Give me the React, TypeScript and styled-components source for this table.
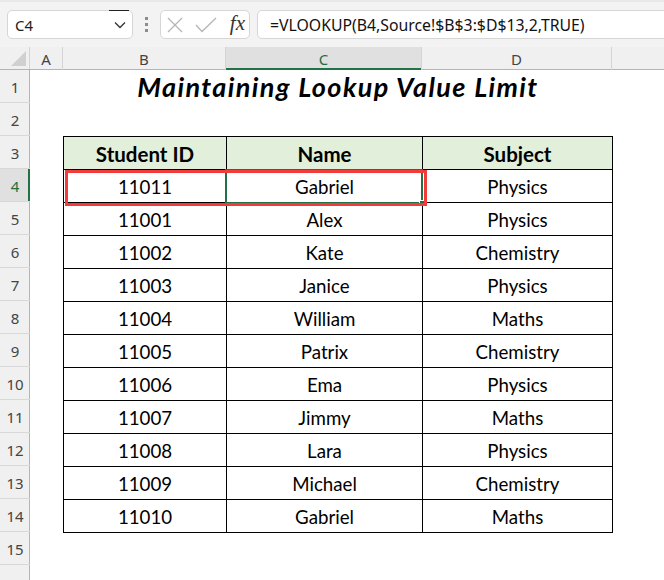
import React from "react";
import styled, { createGlobalStyle } from "styled-components";

const Global = createGlobalStyle`
  html, body { margin: 0; padding: 0; background: #ffffff; overflow: hidden; }
  * { box-sizing: border-box; }
`;

const Page = styled.div`
  width: 664px;
  height: 580px;
  overflow: hidden;
  display: flex;
  flex-direction: column;
  background: #ffffff;
  font-family: "Noto Sans", "Open Sans", sans-serif;
`;

const Toolbar = styled.div`
  height: 47px;
  flex: none;
  background: #f3f3f3;
  border-top: 2px solid #e8e8e8;
  display: flex;
  align-items: center;
  padding: 0 0 0 7px;
`;

const Box = styled.div`
  height: 29px;
  background: #ffffff;
  border: 1px solid #d6d6d6;
  border-radius: 5px;
  display: flex;
  align-items: center;
`;

const NameBox = styled(Box)`
  width: 126px;
  padding-left: 7px;
  position: relative;
  font-size: 15px;
  color: #222;
`;

const NameText = styled.span`
  flex: 1;
`;

const NameMark = styled.div`
  position: absolute;
  top: -1px;
  right: 3px;
  width: 20px;
  height: 1px;
  background: #222;
`;

const Chevron = styled.svg`
  width: 12px;
  height: 8px;
  margin-right: 6px;
`;

const Dots = styled.div`
  width: 27px;
  display: flex;
  flex-direction: column;
  align-items: center;
  gap: 3px;
`;

const Dot = styled.span`
  width: 3px;
  height: 3px;
  background: #8c8c8c;
`;

const FxBox = styled(Box)`
  width: 90px;
  padding: 0 4px 0 6px;
  justify-content: space-between;
  margin-right: 7px;
`;

const FxText = styled.span`
  font-family: "Liberation Serif", "DejaVu Serif", serif;
  font-style: italic;
  font-size: 21px;
  color: #333;
  line-height: 1;
  margin-top: -3px;
`;

const FormulaBox = styled(Box)`
  flex: 1;
  margin-right: -10px;
  padding-left: 12px;
  font-size: 15.8px;
  color: #111;
  border-top-right-radius: 0;
  border-bottom-right-radius: 0;
`;

const ColHeaderRow = styled.div`
  height: 23px;
  flex: none;
  display: flex;
  background: #f0f0f0;
  border-bottom: 1px solid #b4b4b4;
`;

const Corner = styled.div`
  width: 30px;
  flex: none;
  position: relative;
  border-right: 1px solid #d4d4d4;
`;

const CornerTri = styled.div`
  position: absolute;
  right: 3px;
  bottom: 3px;
  width: 0;
  height: 0;
  border-left: 15px solid transparent;
  border-bottom: 15px solid #d0d0d0;
`;

const ColHeader = styled.div<{ $w: number; $active?: boolean }>`
  width: ${(p) => p.$w}px;
  flex: none;
  display: flex;
  align-items: center;
  justify-content: center;
  font-size: 15px;
  color: ${(p) => (p.$active ? "#1e6e42" : "#444")};
  background: ${(p) => (p.$active ? "#e0e0e0" : "transparent")};
  border-right: 1px solid #d4d4d4;
  box-shadow: ${(p) => (p.$active ? "inset 0 -2px 0 #217346" : "none")};
  margin-bottom: -1px;
  padding-top: 1px;
`;

const Body = styled.div`
  flex: 1;
  display: flex;
`;

const RowHeaders = styled.div`
  width: 30px;
  flex: none;
  background: #f0f0f0;
  border-right: 1px solid #b4b4b4;
  display: flex;
  flex-direction: column;
`;

const RowHeader = styled.div<{ $active?: boolean }>`
  height: 33px;
  flex: none;
  display: flex;
  align-items: center;
  justify-content: center;
  font-size: 15px;
  color: ${(p) => (p.$active ? "#1e6e42" : "#444")};
  background: ${(p) => (p.$active ? "#e0e0e0" : "transparent")};
  border-bottom: 1px solid #d8d8d8;
  box-shadow: ${(p) => (p.$active ? "inset -2px 0 0 #217346" : "none")};
  margin-right: -1px;
  padding-top: 2px;
`;

const Sheet = styled.div`
  flex: 1;
  padding-left: 33px;
  display: flex;
  flex-direction: column;
`;

const TitleRow = styled.div`
  width: 550px;
  height: 66px;
  flex: none;
  display: flex;
  justify-content: center;
  padding-top: 0px;
`;

const Title = styled.h1`
  margin: 0;
  height: 33px;
  font-family: "Lato", "Liberation Sans", sans-serif;
  font-weight: 700;
  font-style: italic;
  font-size: 27px;
  letter-spacing: 1.4px;
  line-height: 33px;
  color: #000;
`;

const TableWrap = styled.div`
  position: relative;
  width: 550px;
`;

const Table = styled.div`
  display: grid;
  grid-template-columns: 162px 195px 189px;
  grid-auto-rows: 32px;
  gap: 1px;
  padding: 1px;
  background: #000;
`;

const Cell = styled.div<{ $head?: boolean }>`
  display: flex;
  align-items: center;
  justify-content: center;
  background: ${(p) => (p.$head ? "#e2efda" : "#ffffff")};
  font-family: "Lato", "Liberation Sans", sans-serif;
  font-weight: ${(p) => (p.$head ? 700 : 400)};
  font-size: ${(p) => (p.$head ? "20.5px" : "18.7px")};
  color: #000;
  padding-top: 1px;
`;

const Selection = styled.div`
  position: absolute;
  left: 162px;
  top: 33px;
  width: 198px;
  height: 35px;
  border: 2px solid #217346;
`;

const Handle = styled.div`
  position: absolute;
  right: -4px;
  bottom: -4px;
  width: 6px;
  height: 6px;
  background: #217346;
  border: 1px solid #fff;
`;

const RedMark = styled.div`
  position: absolute;
  left: 2px;
  top: 34px;
  width: 362px;
  height: 36px;
  border: 3px solid #f23b3b;
`;

const rows: [string, string, string][] = [
  ["11011", "Gabriel", "Physics"],
  ["11001", "Alex", "Physics"],
  ["11002", "Kate", "Chemistry"],
  ["11003", "Janice", "Physics"],
  ["11004", "William", "Maths"],
  ["11005", "Patrix", "Chemistry"],
  ["11006", "Ema", "Physics"],
  ["11007", "Jimmy", "Maths"],
  ["11008", "Lara", "Physics"],
  ["11009", "Michael", "Chemistry"],
  ["11010", "Gabriel", "Maths"],
];

export default function App() {
  return (
    <Page>
      <Global />
      <Toolbar>
        <NameBox>
          <NameMark />
          <NameText>C4</NameText>
          <Chevron viewBox="0 0 12 8">
            <path d="M1 1.5 L6 6.5 L11 1.5" fill="none" stroke="#333" strokeWidth="1.3" />
          </Chevron>
        </NameBox>
        <Dots>
          <Dot />
          <Dot />
          <Dot />
        </Dots>
        <FxBox>
          <svg width="16" height="16" viewBox="0 0 16 16">
            <path d="M1 1 L15 15 M15 1 L1 15" stroke="#b5b5b5" strokeWidth="1.3" fill="none" />
          </svg>
          <svg width="22" height="16" viewBox="0 0 22 16">
            <path d="M1 8 L7 14.5 L21 1" stroke="#b5b5b5" strokeWidth="1.3" fill="none" />
          </svg>
          <FxText>fx</FxText>
        </FxBox>
        <FormulaBox>=VLOOKUP(B4,Source!$B$3:$D$13,2,TRUE)</FormulaBox>
      </Toolbar>
      <ColHeaderRow>
        <Corner>
          <CornerTri />
        </Corner>
        <ColHeader $w={33}>A</ColHeader>
        <ColHeader $w={163}>B</ColHeader>
        <ColHeader $w={196} $active>C</ColHeader>
        <ColHeader $w={190}>D</ColHeader>
        <ColHeader $w={80} />
      </ColHeaderRow>
      <Body>
        <RowHeaders>
          {Array.from({ length: 15 }, (_, i) => (
            <RowHeader key={i} $active={i === 3}>
              {i + 1}
            </RowHeader>
          ))}
        </RowHeaders>
        <Sheet>
          <TitleRow>
            <Title>Maintaining Lookup Value Limit</Title>
          </TitleRow>
          <TableWrap>
            <Table>
              <Cell $head>Student ID</Cell>
              <Cell $head>Name</Cell>
              <Cell $head>Subject</Cell>
              {rows.map((r) =>
                r.map((v, j) => <Cell key={r[0] + j}>{v}</Cell>)
              )}
            </Table>
            <Selection>
              <Handle />
            </Selection>
            <RedMark />
          </TableWrap>
        </Sheet>
      </Body>
    </Page>
  );
}
